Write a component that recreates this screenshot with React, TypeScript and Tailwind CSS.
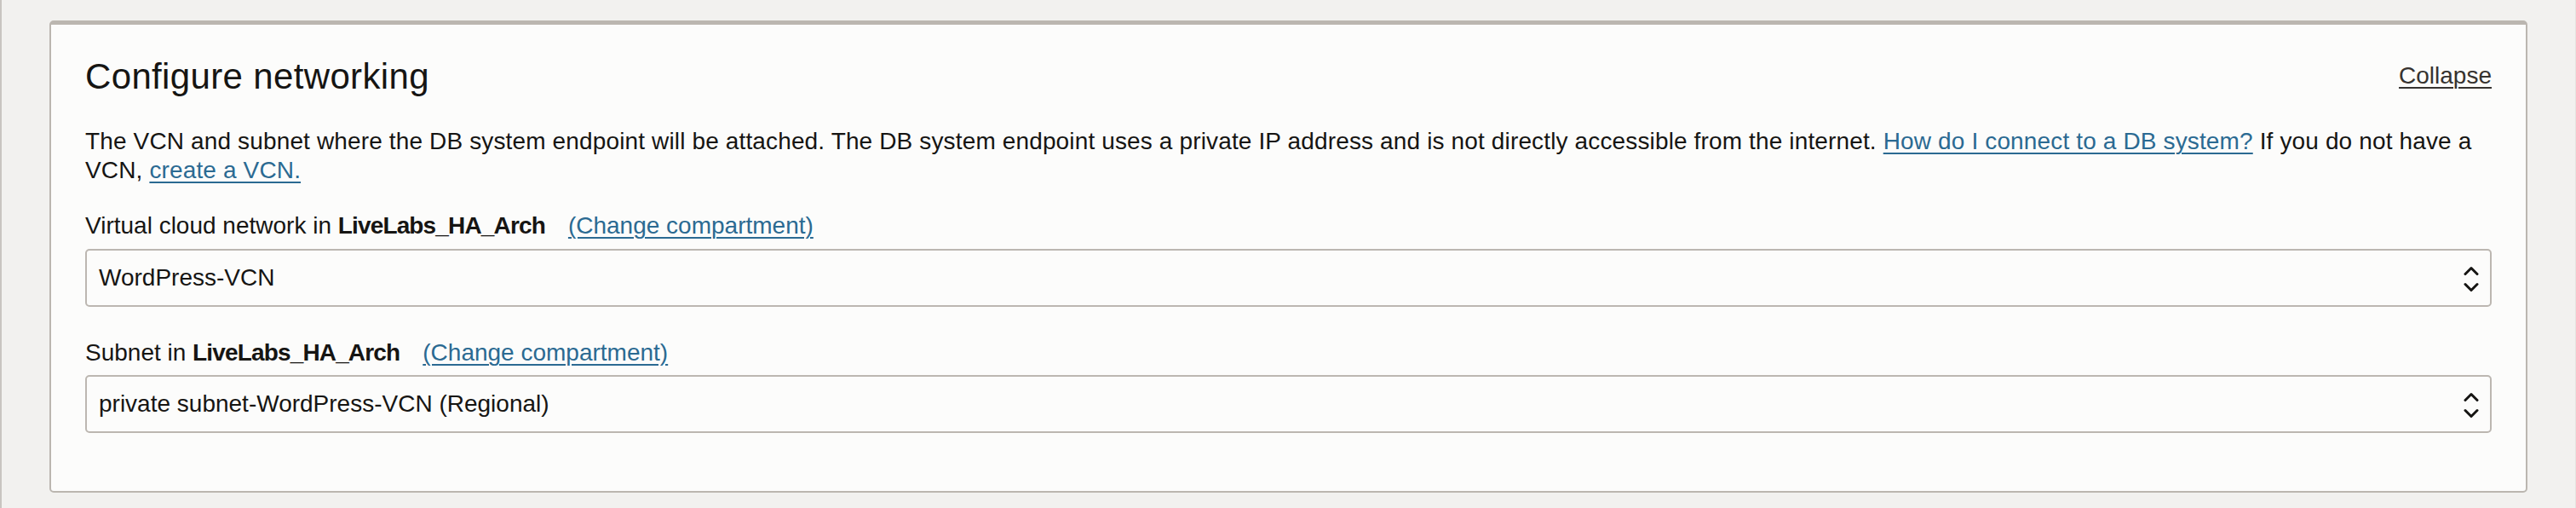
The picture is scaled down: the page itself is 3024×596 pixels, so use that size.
import React from "react";

function Chevrons() {
  return (
    <svg width="18" height="34" viewBox="0 0 18 34" fill="none" className="shrink-0">
      <path d="M2 12.5 L9 5.5 L16 12.5" stroke="#161513" strokeWidth="3" strokeLinecap="round" strokeLinejoin="round" />
      <path d="M2 24.5 L9 31.5 L16 24.5" stroke="#161513" strokeWidth="3" strokeLinecap="round" strokeLinejoin="round" />
    </svg>
  );
}

function SelectBox({ value }: { value: string }) {
  return (
    <div className="flex h-[68px] items-center justify-between rounded-[5px] border-2 border-[#bcb7b1] bg-[#fcfcfb] pl-[14px] pr-[13px]">
      <span className="text-[28px] leading-[34px] text-[#161513]">{value}</span>
      <Chevrons />
    </div>
  );
}

function Label({ prefix, bold }: { prefix: string; bold: string }) {
  return (
    <div className="flex items-start text-[28px] leading-[34px] text-[#161513]">
      <span className="whitespace-pre">{prefix} </span>
      <span className="font-bold tracking-[-0.85px]">{bold}</span>
      <a href="#" className="ml-[27px] text-[#2b6a92] underline decoration-[2px] underline-offset-[4px]">
        (Change compartment)
      </a>
    </div>
  );
}

export default function App() {
  return (
    <div
      className="flex min-h-[596px] w-full flex-col border-l-2 border-r border-l-[#c9c5c1] border-r-[#e6e3e0] bg-[#f2f1ef] pb-[18px] pt-[24px]"
      style={{ fontFamily: '"Liberation Sans", Arial, Helvetica, sans-serif' }}
    >
      <div className="ml-[56px] mr-[56px] rounded-[5px] border-2 border-t-[5px] border-[#bbb6b0] bg-[#fcfcfb] px-[40px] pb-[68px] pt-[37px]">
        <div className="flex items-start justify-between">
          <h1 className="text-[42px] font-normal leading-[48px] tracking-[0.35px] text-[#161513]">Configure networking</h1>
          <a href="#" className="mt-[6px] text-[28px] leading-[34px] text-[#363330] underline decoration-[2px] underline-offset-[4px]">
            Collapse
          </a>
        </div>

        <p className="mt-[35px] text-[28px] leading-[34px] tracking-[0.14px] text-[#161513]">
          The VCN and subnet where the DB system endpoint will be attached. The DB system endpoint uses a private IP address and is not directly accessible from the internet.{" "}
          <a href="#" className="text-[#2b6a92] underline decoration-[2px] underline-offset-[4px]">
            How do I connect to a DB system?
          </a>{" "}
          If you do not have a VCN,{" "}
          <a href="#" className="text-[#2b6a92] underline decoration-[2px] underline-offset-[4px]">
            create a VCN.
          </a>
        </p>

        <div className="mt-[31px]">
          <Label prefix="Virtual cloud network in" bold="LiveLabs_HA_Arch" />
        </div>
        <div className="mt-[10px]">
          <SelectBox value="WordPress-VCN" />
        </div>

        <div className="mt-[37px]">
          <Label prefix="Subnet in" bold="LiveLabs_HA_Arch" />
        </div>
        <div className="mt-[9px]">
          <SelectBox value="private subnet-WordPress-VCN (Regional)" />
        </div>
      </div>
    </div>
  );
}
